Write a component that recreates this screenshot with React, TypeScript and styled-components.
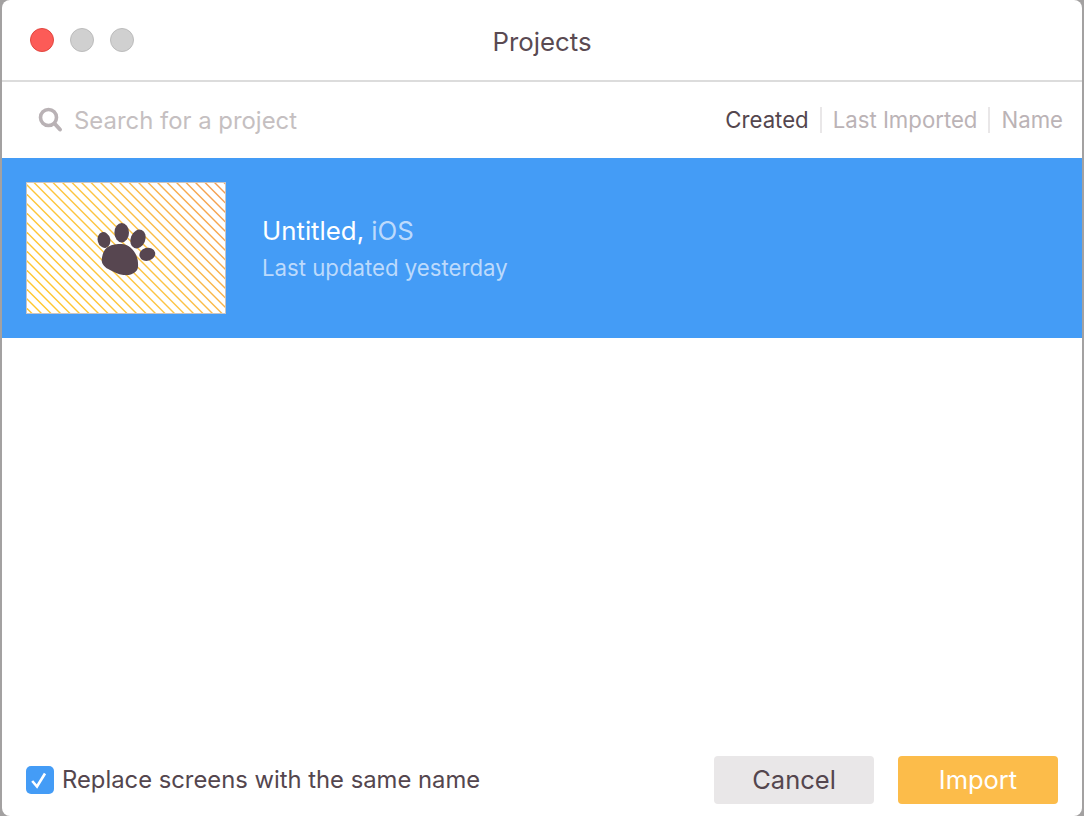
import React from 'react'
import styled, { createGlobalStyle } from 'styled-components'

const GlobalStyle = createGlobalStyle`
  html, body {
    margin: 0;
    padding: 0;
    background: #a3a1a1;
    overflow: hidden;
  }
  * {
    box-sizing: border-box;
  }
`

const Screen = styled.div`
  width: 1084px;
  height: 816px;
  padding: 0 2px;
  background: #a3a1a1;
  font-family: Inter, "Noto Sans", sans-serif;
`

const Dialog = styled.div`
  width: 100%;
  height: 816px;
  background: #fff;
  border-radius: 8px;
  display: flex;
  flex-direction: column;
  overflow: hidden;
`

const TitleBar = styled.header`
  position: relative;
  height: 82px;
  flex: none;
  display: flex;
  align-items: center;
  justify-content: center;
  padding-top: 2px;
  border-bottom: 2px solid #dcdcdc;
`

const Lights = styled.div`
  position: absolute;
  left: 28px;
  top: 28px;
  display: flex;
  gap: 16px;
`

const Light = styled.span<{ $red?: boolean }>`
  width: 24px;
  height: 24px;
  border-radius: 50%;
  background: ${(p) => (p.$red ? '#fc5b57' : '#d0d0d0')};
  border: 1px solid ${(p) => (p.$red ? '#e2463f' : '#bcbcbc')};
`

const Title = styled.h1`
  margin: 0;
  font-size: 25.8px;
  font-weight: 400;
  color: #5a4a52;
`

const FilterBar = styled.div`
  height: 76px;
  flex: none;
  display: flex;
  align-items: center;
  justify-content: space-between;
  padding: 0 8px 0 35px;
`

const Search = styled.div`
  display: flex;
  align-items: center;
  gap: 11px;
  font-size: 23.9px;
  color: #c5bfc1;
`

const SortTabs = styled.nav`
  display: flex;
  align-items: center;
`

const SortTab = styled.span<{ $active?: boolean }>`
  font-size: 22.2px;
  line-height: 26px;
  padding: 0 11px;
  color: ${(p) => (p.$active ? '#54464e' : '#bbb3b6')};
  & + & {
    border-left: 2px solid #e9e7e8;
  }
`

const ProjectRow = styled.div`
  height: 180px;
  flex: none;
  display: flex;
  align-items: center;
  gap: 36px;
  padding: 0 24px;
  background: #449cf6;
`

const Thumb = styled.div`
  width: 200px;
  height: 132px;
  flex: none;
  border: 1px solid #c9c5c3;
  background: #fff;
  overflow: hidden;
`

const ProjectInfo = styled.div`
  display: flex;
  flex-direction: column;
  gap: 9px;
`

const ProjectName = styled.div`
  font-size: 25.8px;
  line-height: 30px;
  color: #fff;
`

const Platform = styled.span`
  color: #bcdafc;
`

const ProjectDate = styled.div`
  font-size: 22.2px;
  line-height: 26px;
  color: #bcdafc;
`

const Spacer = styled.div`
  flex: 1;
`

const Footer = styled.footer`
  height: 80px;
  flex: none;
  display: flex;
  align-items: flex-start;
  justify-content: space-between;
  padding: 20px 24px 0;
`

const CheckLabel = styled.label`
  display: flex;
  align-items: center;
  gap: 8px;
  height: 48px;
  font-size: 23.8px;
  color: #54464e;
`

const CheckText = styled.span`
  padding-bottom: 2px;
`

const CheckBox = styled.span`
  width: 28px;
  height: 28px;
  border-radius: 5px;
  background: #449cf6;
  display: flex;
  align-items: center;
  justify-content: center;
`

const Actions = styled.div`
  display: flex;
  gap: 24px;
`

const Button = styled.button<{ $primary?: boolean }>`
  width: 160px;
  height: 48px;
  border: 0;
  border-radius: 4px;
  padding: 0 0 2px;
  font-family: inherit;
  font-size: 25.5px;
  background: ${(p) => (p.$primary ? '#fcbc4a' : '#e9e7e8')};
  color: ${(p) => (p.$primary ? '#fff' : '#54464e')};
`

const stripes = Array.from({ length: 36 }, (_, i) => i * 9.5 - 136)

const ThumbArt = () => (
  <svg width="198" height="130" viewBox="0 0 198 130" style={{ display: 'block' }}>
    <defs>
      <linearGradient id="stripe" gradientUnits="userSpaceOnUse" x1="0" y1="130" x2="198" y2="0">
        <stop offset="0" stopColor="#ffc72a" />
        <stop offset="0.55" stopColor="#fcc445" />
        <stop offset="1" stopColor="#f39a52" />
      </linearGradient>
    </defs>
    {stripes.map((x) => (
      <line key={x} x1={x} y1={-1} x2={x + 133} y2={132} stroke="url(#stripe)" strokeWidth="1.4" />
    ))}
    <g fill="#574650">
      <path d="M94.7 61 C102 61 109 68 110.7 77 C111.5 83 111 86 109.7 87.5 C106 92 100 92.5 96.3 92 C91 91.5 87 89 83 87 C78 85 74.5 81 74.7 77 C75 71 78 65 81.3 63.7 C85 61.5 90 61 94.7 61 Z" />
      <ellipse cx="77" cy="57" rx="6.3" ry="8" transform="rotate(-15 77 57)" />
      <ellipse cx="94.7" cy="49.7" rx="7.3" ry="9.7" />
      <ellipse cx="111" cy="56" rx="7.3" ry="9.8" transform="rotate(22 111 56)" />
      <ellipse cx="120.3" cy="71.3" rx="8" ry="6.5" transform="rotate(-15 120.3 71.3)" />
    </g>
  </svg>
)

const SearchIcon = () => (
  <svg width="26" height="26" viewBox="0 0 26 26" fill="none" stroke="#b9b2b5">
    <circle cx="11.5" cy="10.5" r="8" strokeWidth="3.6" />
    <path d="M17.5 16.5 L23 22.5" strokeWidth="4" strokeLinecap="round" />
  </svg>
)

const CheckIcon = () => (
  <svg width="20" height="20" viewBox="0 0 20 20" fill="none" stroke="#fff" strokeWidth="2.6">
    <path d="M2.2 11 L7 16.5 L15 3.5" />
  </svg>
)

const App: React.FC = () => {
  return (
    <Screen>
      <GlobalStyle />
      <Dialog>
        <TitleBar>
          <Lights>
            <Light $red />
            <Light />
            <Light />
          </Lights>
          <Title>Projects</Title>
        </TitleBar>
        <FilterBar>
          <Search>
            <SearchIcon />
            Search for a project
          </Search>
          <SortTabs>
            <SortTab $active>Created</SortTab>
            <SortTab>Last Imported</SortTab>
            <SortTab>Name</SortTab>
          </SortTabs>
        </FilterBar>
        <ProjectRow>
          <Thumb>
            <ThumbArt />
          </Thumb>
          <ProjectInfo>
            <ProjectName>
              Untitled, <Platform>iOS</Platform>
            </ProjectName>
            <ProjectDate>Last updated yesterday</ProjectDate>
          </ProjectInfo>
        </ProjectRow>
        <Spacer />
        <Footer>
          <CheckLabel>
            <CheckBox>
              <CheckIcon />
            </CheckBox>
            <CheckText>Replace screens with the same name</CheckText>
          </CheckLabel>
          <Actions>
            <Button>Cancel</Button>
            <Button $primary>Import</Button>
          </Actions>
        </Footer>
      </Dialog>
    </Screen>
  )
}

export default App
